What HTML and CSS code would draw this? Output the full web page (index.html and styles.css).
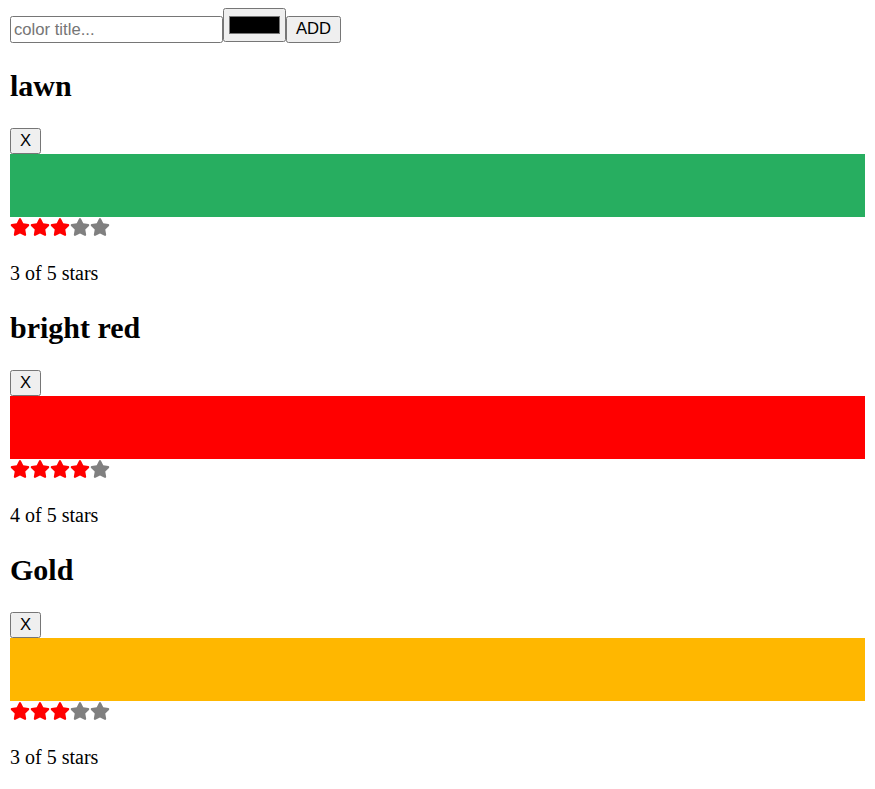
FILE: index.html
```html
<!DOCTYPE html>
<html lang="en">
<head>
<meta charset="utf-8">
<title>Colors</title>
<link rel="stylesheet" href="styles.css">
</head>
<body>
<form class="add-form">
  <input class="title-input" type="text" placeholder="color title..."><input class="color-input" type="color" value="#000000"><button class="btn add-btn" type="button">ADD</button>
</form>

<section class="color">
  <h2 class="color-title">lawn</h2>
  <button class="btn remove-btn" type="button">X</button>
  <div class="swatch" style="background-color:#27ae60"></div>
  <div class="stars"><svg class="star on" viewBox="0 0 576 512"><path d="M259.3 17.8L194 150.2 47.9 171.5c-26.2 3.8-36.7 36.1-17.7 54.6l105.7 103-25 145.5c-4.5 26.3 23.2 46 46.4 33.7L288 439.6l130.7 68.7c23.2 12.2 50.9-7.4 46.4-33.7l-25-145.5 105.7-103c19-18.5 8.5-50.8-17.7-54.6L382 150.2 316.7 17.8c-11.7-23.6-45.6-23.9-57.4 0z"/></svg><svg class="star on" viewBox="0 0 576 512"><path d="M259.3 17.8L194 150.2 47.9 171.5c-26.2 3.8-36.7 36.1-17.7 54.6l105.7 103-25 145.5c-4.5 26.3 23.2 46 46.4 33.7L288 439.6l130.7 68.7c23.2 12.2 50.9-7.4 46.4-33.7l-25-145.5 105.7-103c19-18.5 8.5-50.8-17.7-54.6L382 150.2 316.7 17.8c-11.7-23.6-45.6-23.9-57.4 0z"/></svg><svg class="star on" viewBox="0 0 576 512"><path d="M259.3 17.8L194 150.2 47.9 171.5c-26.2 3.8-36.7 36.1-17.7 54.6l105.7 103-25 145.5c-4.5 26.3 23.2 46 46.4 33.7L288 439.6l130.7 68.7c23.2 12.2 50.9-7.4 46.4-33.7l-25-145.5 105.7-103c19-18.5 8.5-50.8-17.7-54.6L382 150.2 316.7 17.8c-11.7-23.6-45.6-23.9-57.4 0z"/></svg><svg class="star off" viewBox="0 0 576 512"><path d="M259.3 17.8L194 150.2 47.9 171.5c-26.2 3.8-36.7 36.1-17.7 54.6l105.7 103-25 145.5c-4.5 26.3 23.2 46 46.4 33.7L288 439.6l130.7 68.7c23.2 12.2 50.9-7.4 46.4-33.7l-25-145.5 105.7-103c19-18.5 8.5-50.8-17.7-54.6L382 150.2 316.7 17.8c-11.7-23.6-45.6-23.9-57.4 0z"/></svg><svg class="star off" viewBox="0 0 576 512"><path d="M259.3 17.8L194 150.2 47.9 171.5c-26.2 3.8-36.7 36.1-17.7 54.6l105.7 103-25 145.5c-4.5 26.3 23.2 46 46.4 33.7L288 439.6l130.7 68.7c23.2 12.2 50.9-7.4 46.4-33.7l-25-145.5 105.7-103c19-18.5 8.5-50.8-17.7-54.6L382 150.2 316.7 17.8c-11.7-23.6-45.6-23.9-57.4 0z"/></svg></div>
  <p class="rating-text">3 of 5 stars</p>
</section>

<section class="color">
  <h2 class="color-title">bright red</h2>
  <button class="btn remove-btn" type="button">X</button>
  <div class="swatch" style="background-color:#ff0000"></div>
  <div class="stars"><svg class="star on" viewBox="0 0 576 512"><path d="M259.3 17.8L194 150.2 47.9 171.5c-26.2 3.8-36.7 36.1-17.7 54.6l105.7 103-25 145.5c-4.5 26.3 23.2 46 46.4 33.7L288 439.6l130.7 68.7c23.2 12.2 50.9-7.4 46.4-33.7l-25-145.5 105.7-103c19-18.5 8.5-50.8-17.7-54.6L382 150.2 316.7 17.8c-11.7-23.6-45.6-23.9-57.4 0z"/></svg><svg class="star on" viewBox="0 0 576 512"><path d="M259.3 17.8L194 150.2 47.9 171.5c-26.2 3.8-36.7 36.1-17.7 54.6l105.7 103-25 145.5c-4.5 26.3 23.2 46 46.4 33.7L288 439.6l130.7 68.7c23.2 12.2 50.9-7.4 46.4-33.7l-25-145.5 105.7-103c19-18.5 8.5-50.8-17.7-54.6L382 150.2 316.7 17.8c-11.7-23.6-45.6-23.9-57.4 0z"/></svg><svg class="star on" viewBox="0 0 576 512"><path d="M259.3 17.8L194 150.2 47.9 171.5c-26.2 3.8-36.7 36.1-17.7 54.6l105.7 103-25 145.5c-4.5 26.3 23.2 46 46.4 33.7L288 439.6l130.7 68.7c23.2 12.2 50.9-7.4 46.4-33.7l-25-145.5 105.7-103c19-18.5 8.5-50.8-17.7-54.6L382 150.2 316.7 17.8c-11.7-23.6-45.6-23.9-57.4 0z"/></svg><svg class="star on" viewBox="0 0 576 512"><path d="M259.3 17.8L194 150.2 47.9 171.5c-26.2 3.8-36.7 36.1-17.7 54.6l105.7 103-25 145.5c-4.5 26.3 23.2 46 46.4 33.7L288 439.6l130.7 68.7c23.2 12.2 50.9-7.4 46.4-33.7l-25-145.5 105.7-103c19-18.5 8.5-50.8-17.7-54.6L382 150.2 316.7 17.8c-11.7-23.6-45.6-23.9-57.4 0z"/></svg><svg class="star off" viewBox="0 0 576 512"><path d="M259.3 17.8L194 150.2 47.9 171.5c-26.2 3.8-36.7 36.1-17.7 54.6l105.7 103-25 145.5c-4.5 26.3 23.2 46 46.4 33.7L288 439.6l130.7 68.7c23.2 12.2 50.9-7.4 46.4-33.7l-25-145.5 105.7-103c19-18.5 8.5-50.8-17.7-54.6L382 150.2 316.7 17.8c-11.7-23.6-45.6-23.9-57.4 0z"/></svg></div>
  <p class="rating-text">4 of 5 stars</p>
</section>

<section class="color">
  <h2 class="color-title">Gold</h2>
  <button class="btn remove-btn" type="button">X</button>
  <div class="swatch" style="background-color:#ffb700"></div>
  <div class="stars"><svg class="star on" viewBox="0 0 576 512"><path d="M259.3 17.8L194 150.2 47.9 171.5c-26.2 3.8-36.7 36.1-17.7 54.6l105.7 103-25 145.5c-4.5 26.3 23.2 46 46.4 33.7L288 439.6l130.7 68.7c23.2 12.2 50.9-7.4 46.4-33.7l-25-145.5 105.7-103c19-18.5 8.5-50.8-17.7-54.6L382 150.2 316.7 17.8c-11.7-23.6-45.6-23.9-57.4 0z"/></svg><svg class="star on" viewBox="0 0 576 512"><path d="M259.3 17.8L194 150.2 47.9 171.5c-26.2 3.8-36.7 36.1-17.7 54.6l105.7 103-25 145.5c-4.5 26.3 23.2 46 46.4 33.7L288 439.6l130.7 68.7c23.2 12.2 50.9-7.4 46.4-33.7l-25-145.5 105.7-103c19-18.5 8.5-50.8-17.7-54.6L382 150.2 316.7 17.8c-11.7-23.6-45.6-23.9-57.4 0z"/></svg><svg class="star on" viewBox="0 0 576 512"><path d="M259.3 17.8L194 150.2 47.9 171.5c-26.2 3.8-36.7 36.1-17.7 54.6l105.7 103-25 145.5c-4.5 26.3 23.2 46 46.4 33.7L288 439.6l130.7 68.7c23.2 12.2 50.9-7.4 46.4-33.7l-25-145.5 105.7-103c19-18.5 8.5-50.8-17.7-54.6L382 150.2 316.7 17.8c-11.7-23.6-45.6-23.9-57.4 0z"/></svg><svg class="star off" viewBox="0 0 576 512"><path d="M259.3 17.8L194 150.2 47.9 171.5c-26.2 3.8-36.7 36.1-17.7 54.6l105.7 103-25 145.5c-4.5 26.3 23.2 46 46.4 33.7L288 439.6l130.7 68.7c23.2 12.2 50.9-7.4 46.4-33.7l-25-145.5 105.7-103c19-18.5 8.5-50.8-17.7-54.6L382 150.2 316.7 17.8c-11.7-23.6-45.6-23.9-57.4 0z"/></svg><svg class="star off" viewBox="0 0 576 512"><path d="M259.3 17.8L194 150.2 47.9 171.5c-26.2 3.8-36.7 36.1-17.7 54.6l105.7 103-25 145.5c-4.5 26.3 23.2 46 46.4 33.7L288 439.6l130.7 68.7c23.2 12.2 50.9-7.4 46.4-33.7l-25-145.5 105.7-103c19-18.5 8.5-50.8-17.7-54.6L382 150.2 316.7 17.8c-11.7-23.6-45.6-23.9-57.4 0z"/></svg></div>
  <p class="rating-text">3 of 5 stars</p>
</section>
</body>
</html>
```

FILE: styles.css
```css
html {
  overflow: hidden;
}

body {
  margin: 8px 10px 0 10px;
  font-family: "Liberation Serif", "Times New Roman", serif;
  font-size: 20px;
  color: #000;
  background: #fff;
}

.add-form {
  display: flex;
  align-items: flex-start;
  margin: 0;
}

.title-input {
  box-sizing: border-box;
  width: 213px;
  height: 27px;
  margin: 8px 0 0 0;
  padding: 1px 3px;
  border: 1px solid #767676;
  border-radius: 2.5px;
  font-family: "Liberation Sans", Arial, sans-serif;
  font-size: 16.67px;
  color: #000;
  background: #fff;
  outline: none;
}

.title-input::placeholder {
  color: #757575;
}

.color-input {
  box-sizing: border-box;
  width: 63px;
  height: 34px;
  margin: 0;
  padding: 1px 2px;
  border: 1px solid #767676;
  border-radius: 2.5px;
  background: #efefef;
  cursor: pointer;
}

.color-input::-webkit-color-swatch-wrapper {
  padding: 6px 3px 6px 3px;
}

.color-input::-webkit-color-swatch {
  border: 1px solid #777;
  border-radius: 0;
}

.btn {
  box-sizing: border-box;
  margin: 0;
  padding: 0;
  border: 1px solid #767676;
  border-radius: 2.5px;
  background: #efefef;
  font-family: "Liberation Sans", Arial, sans-serif;
  font-size: 16.67px;
  color: #000;
  line-height: 1;
  cursor: pointer;
}

.add-btn {
  width: 55px;
  height: 27px;
  margin-top: 8px;
}

.color-title {
  margin: 26px 0 25px 0;
  font-size: 30px;
  font-weight: bold;
}

.remove-btn {
  display: block;
  width: 31px;
  height: 26px;
}

.swatch {
  width: 100vw;
  min-width: calc(100% + 40px);
  height: 63px;
}

.stars {
  font-size: 20px;
}

.star {
  width: 20px;
  height: 20px;
  vertical-align: baseline;
}

.star.on {
  fill: #ff0000;
}

.star.off {
  fill: #808080;
}

.rating-text {
  margin: 20px 0;
  font-size: 20px;
}

.color:last-child .rating-text {
  margin-bottom: 0;
}
```
